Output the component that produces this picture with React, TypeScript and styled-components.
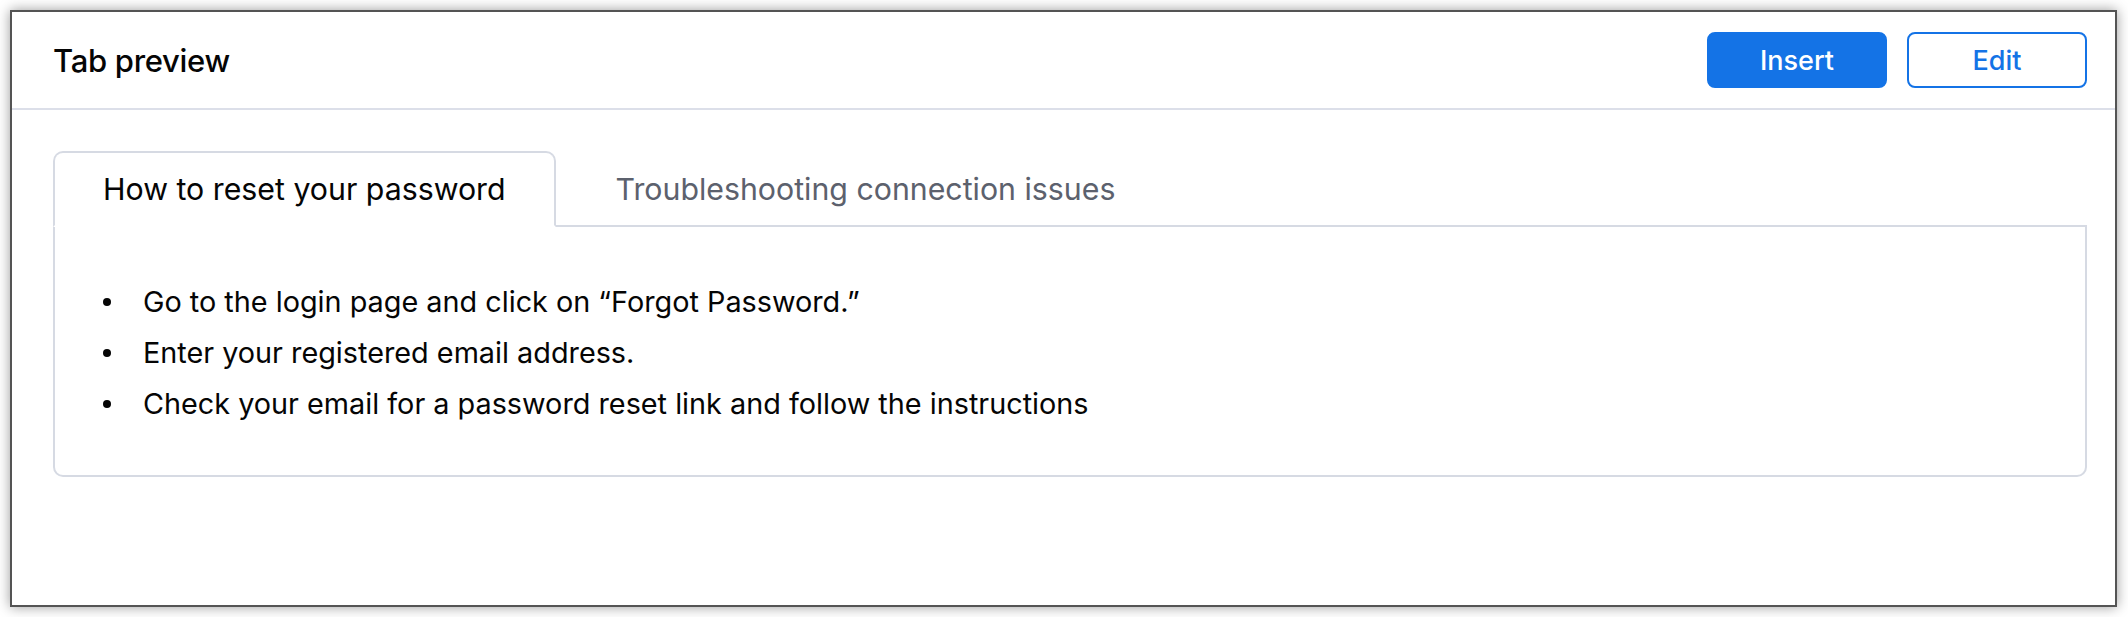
import React from 'react';
import styled, { createGlobalStyle } from 'styled-components';

const tabs = [
  'How to reset your password',
  'Troubleshooting connection issues',
];

const steps = [
  'Go to the login page and click on \u201cForgot Password.\u201d',
  'Enter your registered email address.',
  'Check your email for a password reset link and follow the instructions',
];

const GlobalStyle = createGlobalStyle`
  html, body {
    margin: 0;
    padding: 0;
    background: #ffffff;
  }
  body {
    font-family: Inter, "Noto Sans", "Liberation Sans", sans-serif;
    color: #111111;
  }
`;

export default function App() {
  const active = 0;
  return (
    <>
      <GlobalStyle />
      <Page>
        <Window>
          <Header>
            <Title>Tab preview</Title>
            <Actions>
              <Button $primary>Insert</Button>
              <Button>Edit</Button>
            </Actions>
          </Header>

          <Body>
            <TabList>
              {tabs.map((label, i) => (
                <Tab key={label} $active={i === active}>{label}</Tab>
              ))}
            </TabList>
            <Panel>
              <Steps>
                {steps.map((s) => (
                  <Step key={s}>{s}</Step>
                ))}
              </Steps>
            </Panel>
          </Body>
        </Window>
      </Page>
    </>
  );
}

const Page = styled.div`
  padding: 10px;
`;

const Window = styled.div`
  box-sizing: border-box;
  width: 2107px;
  height: 597px;
  border: 2px solid #545454;
  background: #ffffff;
  box-shadow: 0 0 12px rgba(0, 0, 0, 0.4);
`;

const Header = styled.div`
  box-sizing: border-box;
  height: 98px;
  display: flex;
  align-items: center;
  justify-content: space-between;
  padding: 0 28px 0 41px;
  border-bottom: 2px solid #dcdfe9;
`;

const Title = styled.h1`
  margin: 0;
  font-size: 31px;
  font-weight: 500;
  color: #050505;
  letter-spacing: -0.3px;
`;

const Actions = styled.div`
  display: flex;
  align-items: center;
  gap: 20px;
`;

const Button = styled.button<{ $primary?: boolean }>`
  box-sizing: border-box;
  width: 180px;
  height: 56px;
  border-radius: 8px;
  border: 2px solid #1473e6;
  background: ${(p) => (p.$primary ? '#1473e6' : '#ffffff')};
  color: ${(p) => (p.$primary ? '#ffffff' : '#1473e6')};
  font-family: Inter, "Noto Sans", sans-serif;
  font-size: 27px;
  font-weight: 500;
  cursor: pointer;
`;

const Body = styled.div`
  padding: 41px 28px 0 41px;
`;

const TabList = styled.div`
  display: flex;
  align-items: flex-end;
  gap: 12px;
  border-bottom: 2px solid #d6dae3;
`;

const Tab = styled.div<{ $active?: boolean }>`
  box-sizing: border-box;
  height: ${(p) => (p.$active ? '76px' : '74px')};
  display: flex;
  align-items: center;
  padding: 0 48px;
  margin-bottom: -2px;
  font-size: 30.3px;
  color: ${(p) => (p.$active ? '#050505' : '#5c616d')};
  background: #ffffff;
  border-style: solid;
  border-width: ${(p) => (p.$active ? '2px 2px 2px 2px' : '0 0 2px 0')};
  border-color: ${(p) => (p.$active ? '#d6dae3 #d6dae3 #ffffff #d6dae3' : '#d6dae3')};
  border-radius: ${(p) => (p.$active ? '10px 10px 0 0' : '0')};
`;

const Panel = styled.div`
  box-sizing: border-box;
  height: 250px;
  border: 2px solid #d6dae3;
  border-top: none;
  border-radius: 0 0 10px 10px;
  padding: 49px 0 0 0;
`;

const Steps = styled.ul`
  list-style: none;
  margin: 0;
  padding: 0;
`;

const Step = styled.li`
  position: relative;
  padding-left: 88px;
  font-size: 28.8px;
  line-height: 51px;
  color: #050505;

  &::before {
    content: '';
    position: absolute;
    left: 48px;
    top: 22px;
    width: 8px;
    height: 8px;
    border-radius: 50%;
    background: #050505;
  }
`;
